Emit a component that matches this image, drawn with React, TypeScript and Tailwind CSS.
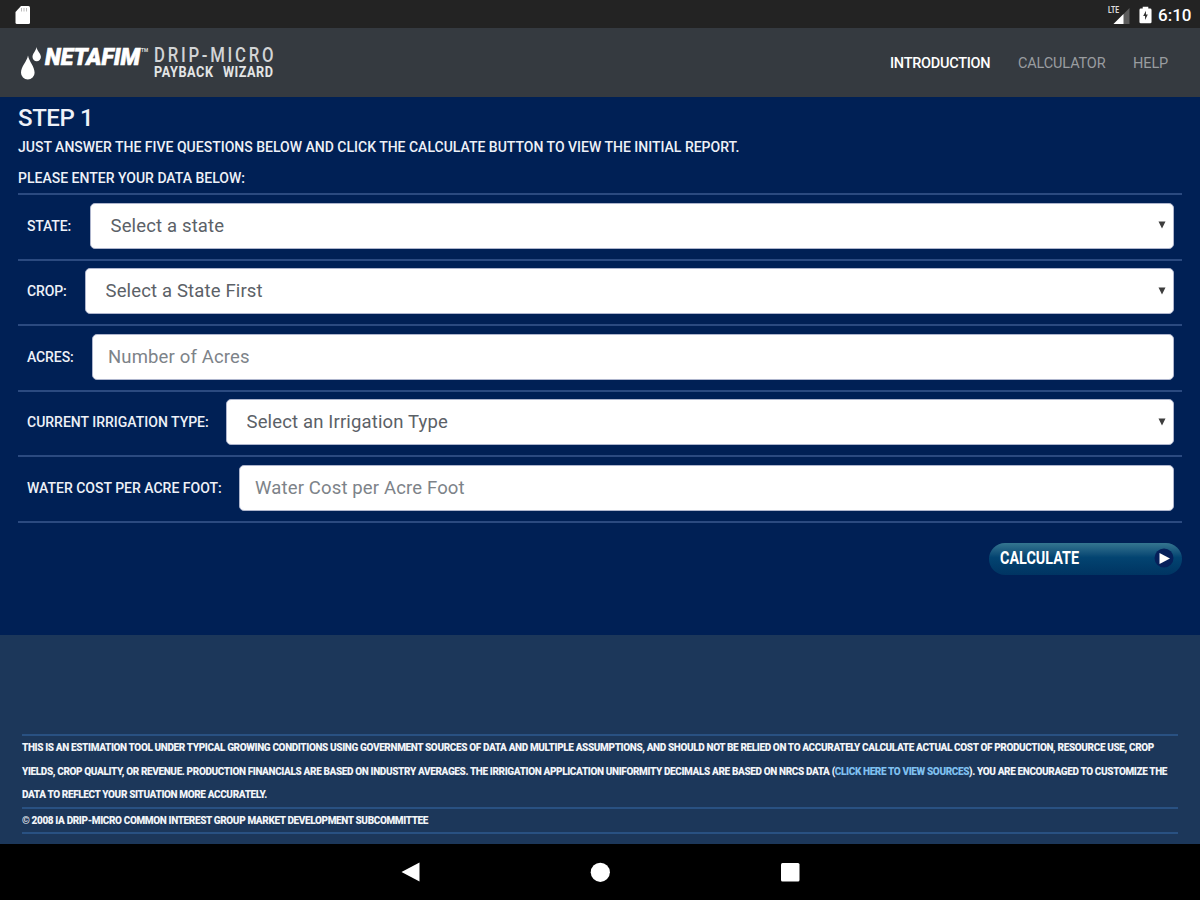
import { useState } from "react";
import clsx from "clsx";

type Field = {
  id: string;
  label: string;
  placeholder: string;
  kind: "select" | "input";
  labelClass: string;
};

const fields: Field[] = [
  { id: "state", label: "State:", placeholder: "Select a state", kind: "select", labelClass: "w-[63px] tracking-[-0.15px]" },
  { id: "crop", label: "Crop:", placeholder: "Select a State First", kind: "select", labelClass: "w-[58px] tracking-[-0.15px]" },
  { id: "acres", label: "Acres:", placeholder: "Number of Acres", kind: "input", labelClass: "w-[65px] tracking-[-0.1px]" },
  { id: "irrigation", label: "Current Irrigation Type:", placeholder: "Select an Irrigation Type", kind: "select", labelClass: "w-[199px]" },
  { id: "water", label: "Water Cost per Acre Foot:", placeholder: "Water Cost per Acre Foot", kind: "input", labelClass: "w-[212px]" },
];

const navItems = [
  { name: "Introduction", className: "w-[128px] tracking-[-0.27px]" },
  { name: "Calculator", className: "w-[115px] tracking-[-0.15px]" },
  { name: "Help", className: "w-[67px] tracking-[-0.1px]" },
];

function StatusBar() {
  return (
    <div className="flex h-7 shrink-0 items-center justify-between bg-[#232323] pt-px pr-[8px] pl-[15px]">
      <svg width="16" height="20" viewBox="0 0 16 20">
        <path d="M6 1h7.500q1.500 0 1.500 1.500v15q0 1.500-1.500 1.500h-11.500q-1.500 0-1.500-1.500V7z" fill="#fff" />
        <path d="M6.500 3v3.500M9 3v3.500M11.500 3v3.500" stroke="#bbb" />
      </svg>
      <div className="flex items-center">
        <svg width="22" height="20" viewBox="0 0 22 20" className="overflow-visible">
          <path d="M21.500 3v16H5.500z" fill="#5d5d5d" />
          <path d="M15.500 9V19H5.500z" fill="#fff" />
          <text x="0" y="8" fontFamily="Roboto, sans-serif" fontSize="9" fontWeight="700" fill="#ddd" textLength="11" lengthAdjust="spacingAndGlyphs">LTE</text>
        </svg>
        <svg className="ml-[9px]" width="13" height="20" viewBox="0 0 14 20">
          <path d="M4 1h6v2h2q1.500 0 1.500 1.500v13q0 1.500-1.500 1.500h-10q-1.500 0-1.500-1.500v-13q0-1.500 1.500-1.500h2z" fill="#fff" />
          <path d="M7.500 5.500L4.500 11h2v4.500l3-6h-2z" fill="#333" />
        </svg>
        <span className="ml-[6px] w-[34px] text-[17px] leading-5 font-medium whitespace-nowrap text-white">6:10</span>
      </div>
    </div>
  );
}

function Logo() {
  return (
    <svg width="256" height="40" viewBox="0 0 256 40" className="mt-[7px] overflow-visible font-['Roboto',sans-serif]">
      <path d="M8 9.500C7 15.500 1 20.500 1 26.700a6.800 6.800 0 0 0 13.600 0C14.600 20.500 9 15.500 8 9.500z" fill="#fff" />
      <path d="M16.500 1C16 5 12.500 7.500 12.500 11a4.200 4.200 0 0 0 8.400 0C20.900 7.500 17 5 16.500 1z" fill="#fff" />
      <text x="25" y="19" fontSize="23" fontWeight="900" fontStyle="italic" fill="#fff" stroke="#fff" strokeWidth="0.600" textLength="95" lengthAdjust="spacingAndGlyphs">NETAFIM</text>
      <text x="121" y="5.500" fontSize="5" fontWeight="700" fill="#ddd" textLength="7" lengthAdjust="spacingAndGlyphs">TM</text>
      <text transform="translate(134 16) scale(.86 1)" fontSize="19.500" fontWeight="500" fill="#d2d4d6" textLength="139">DRIP-MICRO</text>
      <text transform="translate(134 31) scale(.82 1)" fontSize="15.500" fontWeight="700" fill="#e3e5e6" textLength="72">PAYBACK</text>
      <text transform="translate(203 31) scale(.82 1)" fontSize="15.500" fontWeight="700" fill="#e3e5e6" textLength="61">WIZARD</text>
    </svg>
  );
}

function Header({ active, onSelect }: { active: string; onSelect: (name: string) => void }) {
  return (
    <header className="flex h-[69px] shrink-0 items-center justify-between bg-[#353a40] pl-5">
      <Logo />
      <nav className="flex pt-[2px]">
        {navItems.map((item) => (
          <button
            key={item.name}
            onClick={() => onSelect(item.name)}
            className={clsx(
              "text-left text-[14.5px] leading-5 whitespace-nowrap uppercase",
              item.className,
              active === item.name ? "font-medium text-white" : "text-[#9a9da0]"
            )}
          >
            {item.name}
          </button>
        ))}
      </nav>
    </header>
  );
}

function FieldRow({ field }: { field: Field }) {
  const control =
    "h-full w-full appearance-none rounded-[5px] border border-[#aeb5cd] bg-white text-[18.5px] tracking-[0.15px] outline-none";

  return (
    <div className="flex h-[65.600px] items-center border-b-2 border-[#2b4a80] pr-2 pb-[2.500px] pl-[9px]">
      <label
        htmlFor={field.id}
        className={clsx("shrink-0 text-[14px] leading-5 font-medium whitespace-nowrap text-[#eef1f8] uppercase", field.labelClass)}
      >
        {field.label}
      </label>
      <div className="relative h-[46px] flex-1">
        {field.kind === "select" ? (
          <>
            <select id={field.id} className={clsx(control, "pt-[2px] pl-[19.500px] text-[#5b6167]")}>
              <option>{field.placeholder}</option>
            </select>
            <svg className="pointer-events-none absolute top-[18.500px] right-[8px]" width="8" height="8" viewBox="0 0 8 8">
              <path d="M0.500 0.500h7L4 7.500z" fill="#3d3d3d" />
            </svg>
          </>
        ) : (
          <input id={field.id} placeholder={field.placeholder} className={clsx(control, "pl-[15px] placeholder:text-[#7d8389]")} />
        )}
      </div>
    </div>
  );
}

function Footer() {
  return (
    <footer className="flex h-[209px] shrink-0 flex-col bg-[#1c375a] px-[22px] pt-[99px] text-[10px] font-black tracking-[-0.38px] text-[#f1f4f8] uppercase">
      <div className="h-[73px] border-t-2 border-[#295182] leading-[23.500px] whitespace-nowrap">
        <p>
          This is an estimation tool under typical growing conditions using government sources of data and multiple assumptions, and should not be relied on to accurately calculate actual cost of production, resource use, crop
        </p>
        <p>
          yields, crop quality, or revenue. Production financials are based on industry averages. The irrigation application uniformity decimals are based on NRCS data (
          <a href="#sources" className="text-[#7fc0f0]">click here to view sources</a>
          ). You are encouraged to customize the
        </p>
        <p>data to reflect your situation more accurately.</p>
      </div>
      <p className="h-[27px] border-y-2 border-[#295182] leading-[23px]">
        © 2008 IA Drip-Micro Common Interest Group Market Development Subcommittee
      </p>
    </footer>
  );
}

function NavigationBar() {
  return (
    <div className="flex h-14 shrink-0 items-center justify-center gap-[170px] bg-black">
      <svg width="20" height="20" viewBox="0 0 20 20">
        <path d="M1.500 10L19.500 0.500v19z" fill="#fff" />
      </svg>
      <svg width="20" height="20" viewBox="0 0 20 20">
        <circle cx="10.300" cy="10.300" r="9.600" fill="#fff" />
      </svg>
      <svg width="20" height="20" viewBox="0 0 20 20">
        <rect x="1" y="1" width="18.500" height="18.500" rx="1.500" fill="#fff" />
      </svg>
    </div>
  );
}

export default function App() {
  const [active, setActive] = useState("Introduction");

  return (
    <div className="flex h-[900px] w-[1200px] flex-col overflow-hidden bg-[#002055] font-['Roboto',sans-serif]">
      <StatusBar />
      <Header active={active} onSelect={setActive} />

      <main className="flex flex-1 flex-col px-[18px] pt-[6px] text-[#eef1f8]">
        <h1 className="h-[30px] text-[24px] leading-[30px] font-medium tracking-[-0.4px]">STEP 1</h1>
        <p className="mt-1 text-[14px] leading-5 font-medium whitespace-nowrap uppercase">
          Just answer the five questions below and click the calculate button to view the initial report.
        </p>
        <p className="mt-[11px] text-[14px] leading-5 font-medium uppercase">Please enter your data below:</p>
        <div className="mt-[5px] border-t-2 border-[#2b4a80]">
          {fields.map((field) => (
            <FieldRow key={field.id} field={field} />
          ))}
        </div>
        <button className="mt-5 flex h-8 w-[193px] items-center justify-between self-end rounded-full bg-linear-to-b from-[#347690] via-[#034471] via-45% to-[#003462] pr-2 pb-px pl-[11px]">
          <svg width="80" height="20" viewBox="0 0 80 20" className="overflow-visible font-['Roboto',sans-serif]">
            <text x="0" y="15.500" fontSize="17.500" fontWeight="700" fill="#fff" textLength="79" lengthAdjust="spacingAndGlyphs">CALCULATE</text>
          </svg>
          <svg width="20" height="20" viewBox="0 0 20 20">
            <circle cx="10" cy="10" r="9.500" fill="#06205a" />
            <path d="M5.500 5v11l10.500-5.500z" fill="#fff" />
          </svg>
        </button>
      </main>

      <Footer />
      <NavigationBar />
    </div>
  );
}
